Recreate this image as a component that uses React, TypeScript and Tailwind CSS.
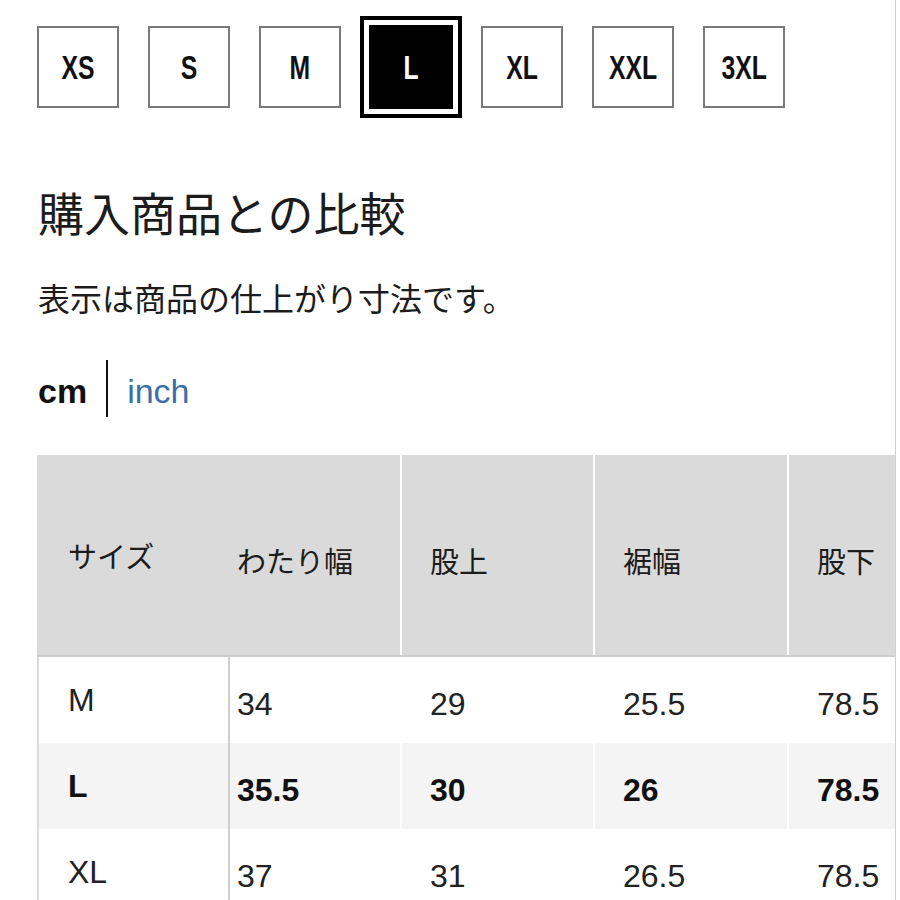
import React from 'react';

const sizes = ['XS', 'S', 'M', 'L', 'XL', 'XXL', '3XL'];

const headers = ['サイズ', 'わたり幅', '股上', '裾幅', '股下'];

const rows = [
  { size: 'M', values: ['34', '29', '25.5', '78.5'], current: false },
  { size: 'L', values: ['35.5', '30', '26', '78.5'], current: true },
  { size: 'XL', values: ['37', '31', '26.5', '78.5'], current: false },
];

const SizeButton: React.FC<{ label: string; selected?: boolean }> = ({ label, selected }) => {
  if (selected) {
    return (
      <div className="w-[102px] h-[102px] mx-[-10px] border-4 border-black bg-white p-[5px] shrink-0">
        <div className="w-full h-full bg-black flex items-center justify-center">
          <span className="inline-block scale-x-75 text-[33px] font-bold text-white leading-none">{label}</span>
        </div>
      </div>
    );
  }
  return (
    <div className="w-[82px] h-[82px] border-2 border-[#7a7a7a] bg-white flex items-center justify-center shrink-0">
      <span className="inline-block scale-x-75 text-[33px] font-bold text-[#111] leading-none">{label}</span>
    </div>
  );
};

const App: React.FC = () => {
  return (
    <div className="w-[900px] h-[900px] bg-white flex overflow-hidden font-['Liberation_Sans','Noto_Sans_CJK_JP',sans-serif] text-[#1a1a1a]">
      <div className="w-[896px] h-full border-r border-[#cfcfcf] overflow-hidden shrink-0">
        {/* size selector */}
        <div className="flex items-center gap-[29px] pl-[37px] pt-[16px]">
          {sizes.map((s) => (
            <SizeButton key={s} label={s} selected={s === 'L'} />
          ))}
        </div>

        <h1 className="mt-[70px] pl-[38px] text-[46px] leading-none font-normal text-[#1c1c1c] font-['Noto_Sans_CJK_JP',sans-serif]">
          購入商品との比較
        </h1>

        <p className="mt-[47px] pl-[38px] text-[32px] leading-none text-[#1c1c1c] font-['Noto_Sans_CJK_JP',sans-serif]">
          表示は商品の仕上がり寸法です。
        </p>

        <div className="mt-[47px] pl-[38px] flex items-start">
          <span className="mt-[14px] text-[34px] leading-[34px] font-bold text-[#111]">cm</span>
          <span className="mx-[19px] w-[2px] h-[57px] bg-[#111]" />
          <span className="mt-[14px] text-[34px] leading-[34px] text-[#3d6ea8]">inch</span>
        </div>

        {/* size table */}
        <div className="mt-[38px] ml-[37px] w-[960px]">
          <div className="flex h-[202px] bg-[#dadada] border-b-2 border-[#cdcdcd] font-['Noto_Sans_CJK_JP',sans-serif] text-[29px] text-[#1c1c1c]">
            <div className="w-[193px] pl-[31px] flex items-center leading-none">{headers[0]}</div>
            <div className="w-[170px] pl-[7px] pt-[10px] flex items-center leading-none">{headers[1]}</div>
            <div className="w-[193px] pl-[28px] pt-[10px] border-l-2 border-white flex items-center leading-none">{headers[2]}</div>
            <div className="w-[194px] pl-[28px] pt-[10px] border-l-2 border-white flex items-center leading-none">{headers[3]}</div>
            <div className="w-[200px] pl-[28px] pt-[10px] border-l-2 border-white flex items-center leading-none">{headers[4]}</div>
          </div>

          {rows.map((r) => (
            <div
              key={r.size}
              className={`flex h-[86px] text-[32px] ${r.current ? 'bg-[#f4f4f4] font-bold text-[#111]' : 'bg-white text-[#222]'}`}
            >
              <div className="w-[193px] pl-[29px] border-l-2 border-[#dcdcdc] border-r-2 border-r-[#cfcfcf] flex items-center">
                {r.size}
              </div>
              <div className="w-[170px] pl-[7px] pt-[8px] flex items-center">{r.values[0]}</div>
              <div className={`w-[193px] pl-[28px] pt-[8px] border-l-2 flex items-center ${r.current ? 'border-white' : 'border-transparent'}`}>
                {r.values[1]}
              </div>
              <div className={`w-[194px] pl-[28px] pt-[8px] border-l-2 flex items-center ${r.current ? 'border-white' : 'border-transparent'}`}>
                {r.values[2]}
              </div>
              <div className={`w-[200px] pl-[28px] pt-[8px] border-l-2 flex items-center ${r.current ? 'border-white' : 'border-transparent'}`}>
                {r.values[3]}
              </div>
            </div>
          ))}
        </div>
      </div>
    </div>
  );
};

export default App;
